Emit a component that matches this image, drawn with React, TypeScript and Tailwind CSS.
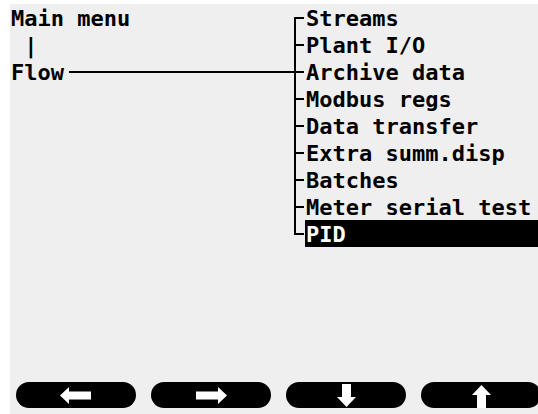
const items = [
  'Streams',
  'Plant I/O',
  'Archive data',
  'Modbus regs',
  'Data transfer',
  'Extra summ.disp',
  'Batches',
  'Meter serial test',
  'PID',
];

const font = { fontFamily: '"DejaVu Sans Mono", "Liberation Mono", monospace' };

const Connector = ({ first, last }: { first: boolean; last: boolean }) => (
  <div className="relative w-[11px] h-[27px] shrink-0">
    <div
      className={
        'absolute left-0 w-[2px] bg-black ' +
        (first ? 'top-[13px] bottom-0' : last ? 'top-0 h-[15px]' : 'top-0 bottom-0')
      }
    />
    <div className="absolute left-0 top-[13px] w-[10px] h-[2px] bg-black" />
  </div>
);

const ArrowLeft = () => (
  <svg width="32" height="17" viewBox="0 0 32 17">
    <path d="M0 8.5 L9 0 L9 4.5 L31 4.5 L31 12.5 L9 12.5 L9 17 Z" fill="#fff" />
  </svg>
);

const ArrowRight = () => (
  <svg width="32" height="17" viewBox="0 0 32 17">
    <path d="M32 8.5 L23 0 L23 4.5 L1 4.5 L1 12.5 L23 12.5 L23 17 Z" fill="#fff" />
  </svg>
);

const ArrowDown = () => (
  <svg width="19" height="23" viewBox="0 0 19 23">
    <path d="M9.5 23 L0 13 L5 13 L5 0 L14 0 L14 13 L19 13 Z" fill="#fff" />
  </svg>
);

const ArrowUp = () => (
  <svg width="19" height="23" viewBox="0 0 19 23">
    <path d="M9.5 0 L0 10 L5 10 L5 23 L14 23 L14 10 L19 10 Z" fill="#fff" />
  </svg>
);

export default function App() {
  return (
    <div className="w-[538px] h-[414px] bg-white pl-[10px] pt-[4px] overflow-hidden" style={font}>
      <div className="w-[528px] h-[410px] bg-[#efefef] flex flex-col text-black font-bold text-[22px]">
        <div className="flex">
          <div className="w-[284px] shrink-0 pl-[1px]">
            <div className="h-[27px] leading-[25px] pt-[2px]">Main menu</div>
            <div className="h-[27px] leading-[25px] pt-[2px] whitespace-pre"> |</div>
            <div className="h-[27px] flex items-center">
              <span className="leading-[25px] pt-[2px]">Flow</span>
              <div className="flex-1 h-[2px] bg-black ml-[5px] mt-[1px]" />
            </div>
          </div>
          <div className="flex-1 flex flex-col">
            {items.map((label, i) => (
              <div key={label} className="flex h-[27px]">
                <Connector first={i === 0} last={i === items.length - 1} />
                <div
                  className={
                    'flex-1 pl-[1px] leading-[25px] pt-[2px] whitespace-pre ' +
                    (label === 'PID' ? 'bg-black text-white' : '')
                  }
                >
                  {label}
                </div>
              </div>
            ))}
          </div>
        </div>
        <div className="mt-auto mb-[6px] flex gap-[15px] pl-[6px]">
          <button className="w-[120px] h-[26px] shrink-0 rounded-full bg-black flex items-center justify-center">
            <ArrowLeft />
          </button>
          <button className="w-[120px] h-[26px] shrink-0 rounded-full bg-black flex items-center justify-center">
            <ArrowRight />
          </button>
          <button className="w-[120px] h-[26px] shrink-0 rounded-full bg-black flex items-end justify-center pb-[1px]">
            <ArrowDown />
          </button>
          <button className="w-[120px] h-[26px] shrink-0 rounded-full bg-black flex items-end justify-center">
            <ArrowUp />
          </button>
        </div>
      </div>
    </div>
  );
}
